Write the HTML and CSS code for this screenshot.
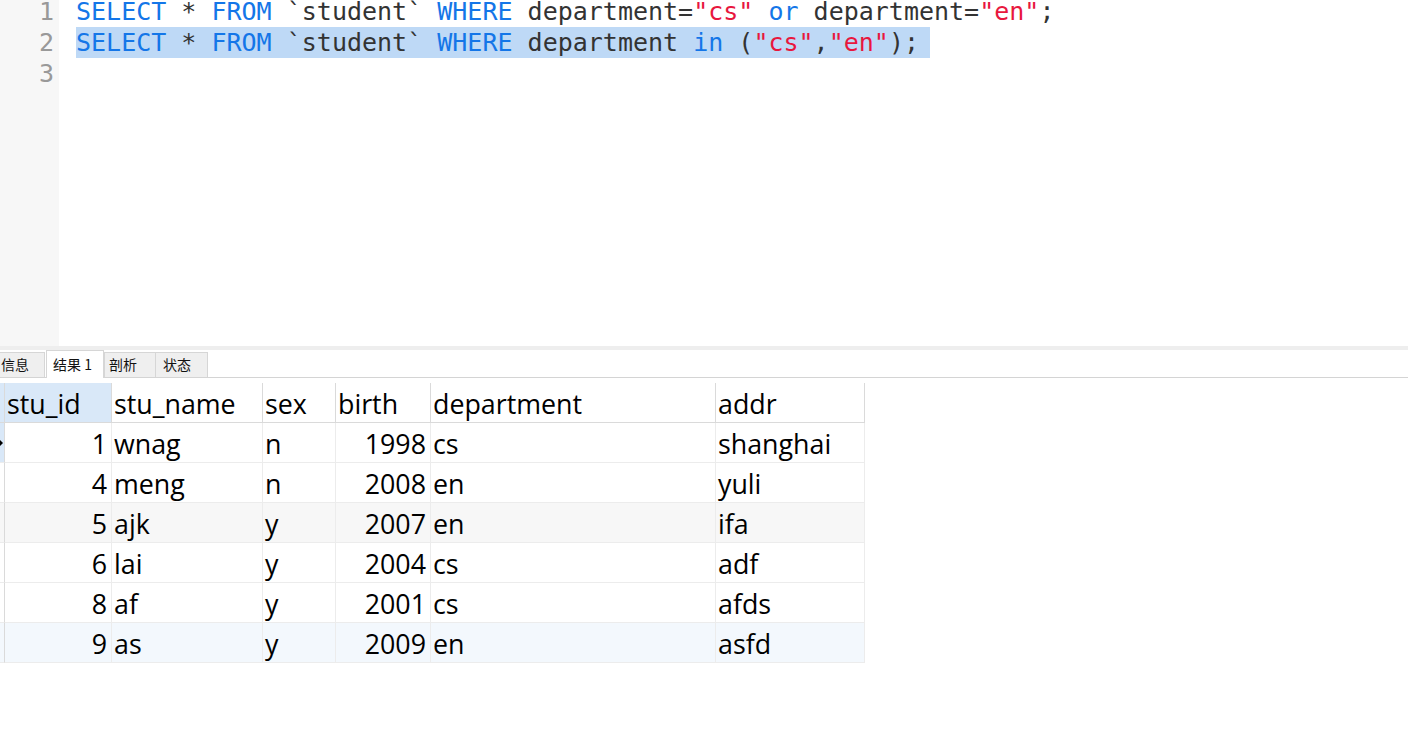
FILE: index.html
```html
<!DOCTYPE html>
<html>
<head>
<meta charset="utf-8">
<link rel="stylesheet" href="styles.css">
</head>
<body>
<div class="editor">
  <div class="gutter">
    <div class="ln top">1</div>
    <div class="ln">2</div>
    <div class="ln">3</div>
  </div>
  <div class="code">
    <div class="cl top"><span class="kw">SELECT</span> * <span class="kw">FROM</span> `student` <span class="kw">WHERE</span> department=<span class="str">"cs"</span> <span class="kw">or</span> department=<span class="str">"en"</span>;</div>
    <div class="cl"><span class="sel"><span class="kw">SELECT</span> * <span class="kw">FROM</span> `student` <span class="kw">WHERE</span> department <span class="kw">in</span> (<span class="str">"cs"</span>,<span class="str">"en"</span>);</span></div>
    <div class="cl"></div>
  </div>
</div>
<div class="splitter"></div>
<div class="tabs">
  <div class="tab first">信息</div>
  <div class="tab active">结果 1</div>
  <div class="tab t3">剖析</div>
  <div class="tab t4">状态</div>
</div>
<div class="grid">
  <div class="c ind hd sel-ind"></div>
  <div class="c hd selcol">stu_id</div>
  <div class="c hd">stu_name</div>
  <div class="c hd">sex</div>
  <div class="c hd">birth</div>
  <div class="c hd">department</div>
  <div class="c hd">addr</div>

  <div class="c ind sel-ind"><span class="arrow"></span></div>
  <div class="c num">1</div>
  <div class="c">wnag</div>
  <div class="c">n</div>
  <div class="c num">1998</div>
  <div class="c">cs</div>
  <div class="c">shanghai</div>

  <div class="c ind"></div>
  <div class="c num">4</div>
  <div class="c">meng</div>
  <div class="c">n</div>
  <div class="c num">2008</div>
  <div class="c">en</div>
  <div class="c">yuli</div>

  <div class="c ind gray"></div>
  <div class="c num gray">5</div>
  <div class="c gray">ajk</div>
  <div class="c gray">y</div>
  <div class="c num gray">2007</div>
  <div class="c gray">en</div>
  <div class="c gray">ifa</div>

  <div class="c ind"></div>
  <div class="c num">6</div>
  <div class="c">lai</div>
  <div class="c">y</div>
  <div class="c num">2004</div>
  <div class="c">cs</div>
  <div class="c">adf</div>

  <div class="c ind"></div>
  <div class="c num">8</div>
  <div class="c">af</div>
  <div class="c">y</div>
  <div class="c num">2001</div>
  <div class="c">cs</div>
  <div class="c">afds</div>

  <div class="c ind blue"></div>
  <div class="c num blue">9</div>
  <div class="c blue">as</div>
  <div class="c blue">y</div>
  <div class="c num blue">2009</div>
  <div class="c blue">en</div>
  <div class="c blue">asfd</div>
</div>
</body>
</html>
```
FILE: styles.css
```css
html, body {
  margin: 0;
  padding: 0;
  background: #ffffff;
}
body {
  width: 1408px;
  height: 736px;
  overflow: hidden;
}
.editor {
  display: flex;
  height: 346px;
  overflow: hidden;
  font-family: "DejaVu Sans Mono", monospace;
  font-size: 25px;
}
.gutter {
  width: 59px;
  background: #f7f7f7;
  flex: none;
}
.ln {
  height: 31px;
  line-height: 31px;
  text-align: right;
  padding-right: 5px;
  color: #999999;
}
.ln.top, .cl.top {
  height: 27px;
  line-height: 23px;
}
.code {
  flex: 1;
  padding-left: 17px;
}
.cl {
  height: 31px;
  line-height: 31px;
  white-space: pre;
  color: #333333;
}
.kw {
  color: #1476e8;
}
.str {
  color: #e8173e;
}
.sel {
  display: inline-block;
  height: 31px;
  background: #bed9f6;
  padding-right: 11px;
}
.splitter {
  height: 4px;
  background: #eeeeee;
}
.tabs {
  display: flex;
  align-items: flex-end;
  height: 27px;
  border-bottom: 1px solid #d4d4d4;
  font-family: "Noto Sans CJK SC", sans-serif;
  font-size: 14px;
  color: #111111;
}
.tab {
  box-sizing: border-box;
  height: 25px;
  line-height: 23px;
  padding-left: 7px;
  background: #efefef;
  border: 1px solid #d6d6d6;
  border-bottom: none;
  white-space: nowrap;
}
.tab.first {
  margin-left: -7px;
  width: 52px;
}
.tab.active {
  height: 28px;
  line-height: 27px;
  margin-left: 1px;
  margin-bottom: -1px;
  width: 58px;
  padding-left: 6px;
  background: #ffffff;
}
.tab.t3 {
  width: 52px;
  padding-left: 4px;
}
.tab.t4 {
  width: 53px;
  margin-left: -1px;
}
.grid {
  margin-top: 5px;
  display: grid;
  grid-template-columns: 5px 107px 151px 73px 95px 285px 149px;
  grid-auto-rows: 40px;
  width: 865px;
  font-family: "Open Sans", sans-serif;
  font-size: 26.8px;
  color: #000000;
}
.c {
  box-sizing: border-box;
  border-right: 1px solid #ececec;
  border-bottom: 1px solid #ececec;
  line-height: 39px;
  padding-top: 1px;
  padding-left: 2px;
  white-space: nowrap;
  overflow: hidden;
  position: relative;
}
.c.hd {
  border-right-color: #dadada;
  border-bottom-color: #dadada;
}
.c.ind {
  padding: 0;
  border-right-color: #dadada;
}
.c.num {
  text-align: right;
  padding-left: 0;
  padding-right: 4px;
}
.selcol, .sel-ind {
  background: #d9e8f8;
}
.gray {
  background: #f7f7f7;
}
.blue {
  background: #f3f8fd;
}
.arrow {
  position: absolute;
  left: 0;
  top: 17px;
  width: 0;
  height: 0;
  border-top: 3px solid transparent;
  border-bottom: 3px solid transparent;
  border-left: 3px solid #000000;
}
```
